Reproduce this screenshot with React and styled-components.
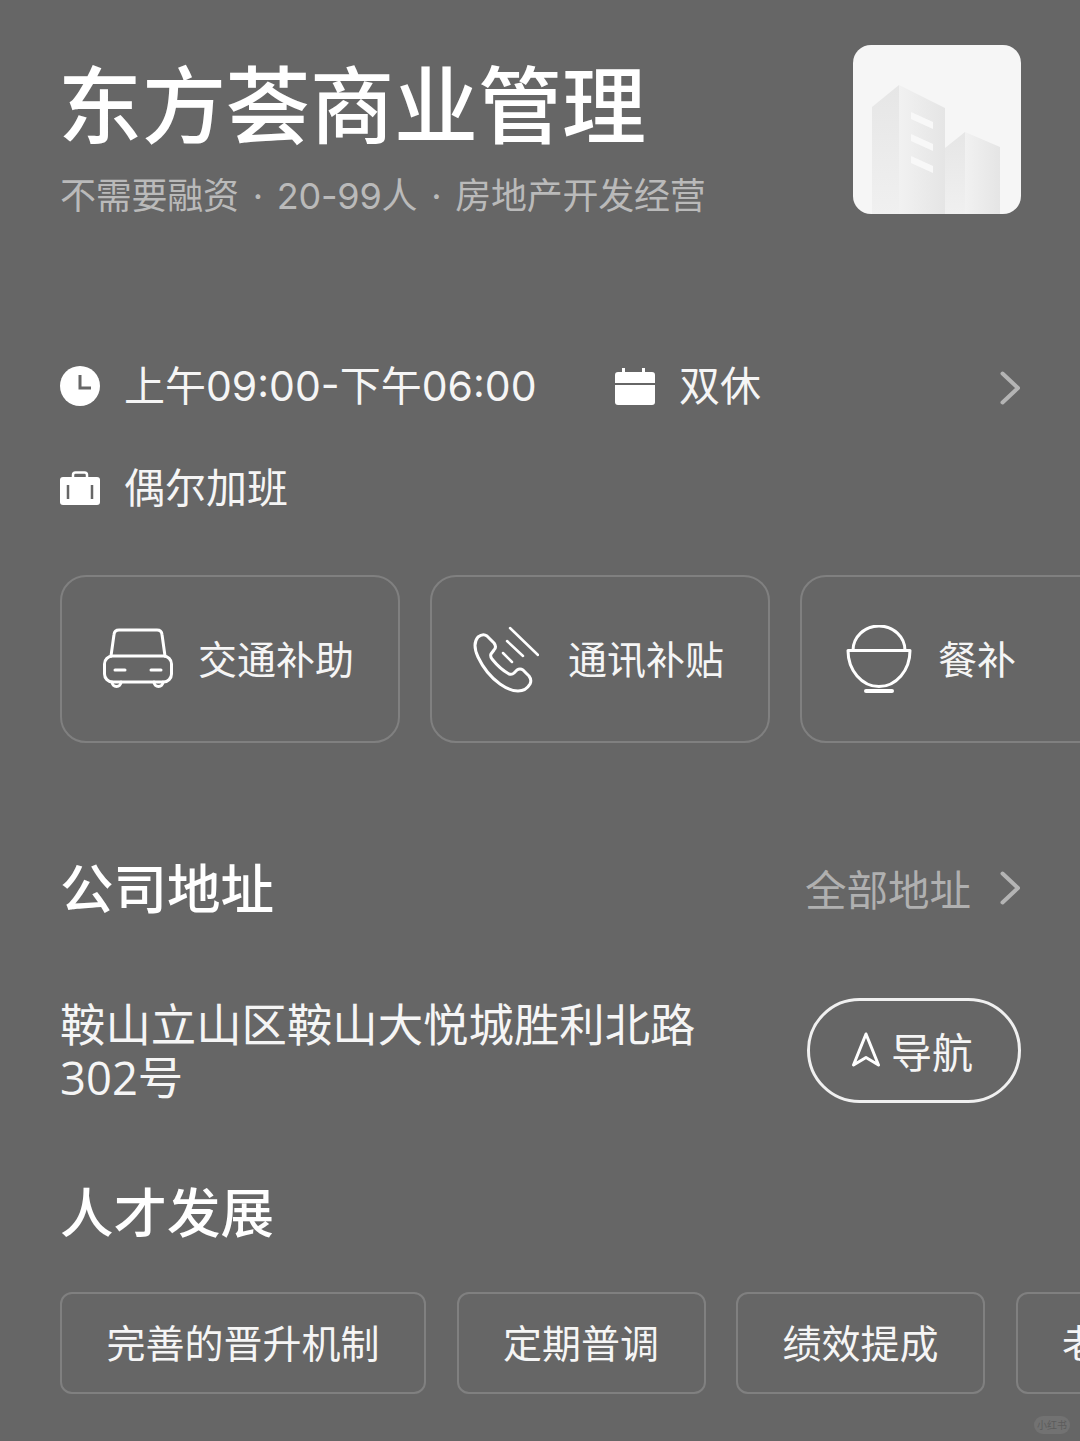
import styled, { createGlobalStyle } from "styled-components";

const GlobalStyle = createGlobalStyle`
  html, body {
    margin: 0;
    padding: 0;
    background: #666666;
  }
  * {
    box-sizing: border-box;
  }
`;

const cjkStack = `"Noto Sans CJK SC", "Noto Sans", sans-serif`;

const Page = styled.div`
  position: relative;
  width: 1080px;
  height: 1441px;
  overflow: hidden;
  padding: 45px 0 0 60px;
  background: #666666;
  color: #f5f5f5;
  font-family: ${cjkStack};
`;

const Header = styled.header`
  display: flex;
  justify-content: space-between;
  align-items: flex-start;
  height: 169px;
  padding-right: 59px;
`;

const TitleBlock = styled.div`
  display: flex;
  flex-direction: column;
`;

const Title = styled.h1`
  margin: 4px 0 0 -2px;
  font-size: 84px;
  line-height: 104px;
  font-weight: 500;
  color: #ffffff;
  white-space: nowrap;
`;

const Subtitle = styled.div`
  margin-top: 23px;
  font-family: "Inter", ${cjkStack};
  font-size: 36px;
  line-height: 40px;
  word-spacing: 4px;
  letter-spacing: -0.23px;
  color: #bababa;
  white-space: nowrap;
`;

const Logo = styled.div`
  width: 168px;
  height: 169px;
  border-radius: 18px;
  overflow: hidden;
  background: #f6f6f6;
`;

const MetaList = styled.div`
  display: flex;
  flex-direction: column;
  gap: 42px;
  margin-top: 142px;
  padding-right: 60px;
`;

const MetaRow = styled.div`
  display: flex;
  align-items: center;
  height: 60px;
`;

const MetaItem = styled.div`
  display: flex;
  align-items: center;
  gap: 24px;
  width: ${(props) => (props.$width ? `${props.$width}px` : "auto")};
  font-family: "Inter", ${cjkStack};
  font-size: 41px;
  line-height: 60px;
  white-space: nowrap;
`;

const Push = styled.div`
  margin-left: auto;
  display: flex;
  align-items: center;
  gap: 29px;
`;

const MetaChevron = styled(Push)`
  padding-top: 3px;
`;

const ScrollRow = styled.div`
  display: flex;
  gap: 30px;
  width: 1200px;
`;

const BenefitRow = styled(ScrollRow)`
  margin-top: 57px;
`;

const BenefitCard = styled.div`
  flex: 0 0 340px;
  height: 168px;
  display: flex;
  align-items: center;
  gap: ${(props) => props.$gap}px;
  padding-left: ${(props) => props.$inset}px;
  border: 2px solid #808080;
  border-radius: 26px;
  white-space: nowrap;
`;

const CardLabel = styled.span`
  margin-top: -4px;
  font-size: 39px;
`;

const SectionHead = styled.div`
  display: flex;
  align-items: center;
  justify-content: space-between;
  height: 60px;
  margin-top: ${(props) => props.$top}px;
  padding-right: 60px;
`;

const SectionTitle = styled.h2`
  margin: 0;
  padding-bottom: 5px;
  font-size: 53.5px;
  line-height: 60px;
  font-weight: 500;
  color: #ffffff;
`;

const MoreLabel = styled.span`
  font-size: 41.5px;
  line-height: 60px;
  color: #b0b0b0;
`;

const AddressRow = styled.div`
  display: flex;
  justify-content: space-between;
  align-items: flex-start;
  margin-top: 80px;
  padding-right: 59px;
`;

const AddressText = styled.div`
  width: 640px;
  font-family: "Open Sans", ${cjkStack};
  font-size: 45.4px;
  line-height: 53px;
`;

const NavButton = styled.div`
  width: 214px;
  height: 105px;
  display: flex;
  align-items: center;
  justify-content: center;
  gap: 11px;
  padding: 0 3px 2px 0;
  border: 3px solid #f0f0f0;
  border-radius: 53px;
  font-size: 41px;
`;

const TagRow = styled(ScrollRow)`
  gap: 30.5px;
  margin-top: 50px;
`;

const Tag = styled.div`
  flex: 0 0 auto;
  height: 102px;
  display: flex;
  align-items: center;
  padding: 0 44.5px 4px;
  border: 2px solid #808080;
  border-radius: 12px;
  font-size: 39px;
  white-space: nowrap;
`;

const Watermark = styled.div`
  position: absolute;
  right: 10px;
  bottom: 7px;
  width: 36px;
  height: 18px;
  border-radius: 9px;
  background: #727272;
  color: #5c5c5c;
  font-size: 10px;
  line-height: 18px;
  text-align: center;
  white-space: nowrap;
`;

const BuildingLogo = () => (
  <svg width="168" height="169" viewBox="0 0 168 169">
    <defs>
      <linearGradient id="towerFade" x1="0" y1="0" x2="0" y2="1">
        <stop offset="0" stopColor="#e6e6e6" />
        <stop offset="1" stopColor="#f0f0f0" />
      </linearGradient>
      <linearGradient id="towerSide" x1="0" y1="0" x2="1" y2="0">
        <stop offset="0" stopColor="#f1f1f1" />
        <stop offset="1" stopColor="#e5e5e5" />
      </linearGradient>
    </defs>
    <path d="M19 62L46 40V169H19Z" fill="url(#towerFade)" />
    <path d="M46 40L92 63V169H46Z" fill="url(#towerSide)" />
    <path d="M92 103L112 87V169H92Z" fill="url(#towerFade)" />
    <path d="M112 87L147 102V169H112Z" fill="url(#towerSide)" />
    <path d="M58 67L80 77V84L58 74Z" fill="#f8f8f8" />
    <path d="M58 89L80 99V106L58 96Z" fill="#f8f8f8" />
    <path d="M58 111L80 121V128L58 118Z" fill="#f8f8f8" />
  </svg>
);

const ClockIcon = () => (
  <svg width="40" height="40" viewBox="0 0 40 40">
    <circle cx="20" cy="20" r="20" fill="#ffffff" />
    <path d="M20 9V22H31" fill="none" stroke="#666666" strokeWidth="3" />
  </svg>
);

const CalendarIcon = () => (
  <svg width="40" height="38" viewBox="0 0 40 38">
    <path
      d="M3 5H7V1H10V5H27V1H30V5H37A3 3 0 0 1 40 8V16H0V8A3 3 0 0 1 3 5Z"
      fill="#ffffff"
    />
    <path
      d="M0 18H40V35A3 3 0 0 1 37 38H3A3 3 0 0 1 0 35Z"
      fill="#ffffff"
    />
  </svg>
);

const CaseIcon = () => (
  <svg width="40" height="34" viewBox="0 0 40 34">
    <path
      d="M13 7V4A2.5 2.5 0 0 1 15.5 1.5H24.5A2.5 2.5 0 0 1 27 4V7"
      fill="none"
      stroke="#ffffff"
      strokeWidth="2.5"
    />
    <rect y="6" width="40" height="28" rx="3" fill="#ffffff" />
    <path
      d="M8 14V28M32 14V28"
      fill="none"
      stroke="#666666"
      strokeWidth="2.5"
    />
  </svg>
);

const ChevronIcon = () => (
  <svg width="20" height="34" viewBox="0 0 20 34">
    <path
      d="M2.5 2.5L18 17L2.5 31.5"
      fill="none"
      stroke="#b4b4b4"
      strokeWidth="4"
      strokeLinecap="round"
      strokeLinejoin="round"
    />
  </svg>
);

const CarIcon = () => (
  <svg width="70" height="62" viewBox="0 0 70 62" fill="none" stroke="#ffffff" strokeWidth="3" strokeLinecap="round">
    <rect x="1.5" y="28" width="67" height="26" rx="8" />
    <path d="M8 28L11 6.5Q11.5 2 16 2H54Q58.5 2 59 6.5L62 28" />
    <path d="M12 42H22M48 42H58" />
    <path d="M9 54A4.5 4.5 0 0 0 18 54M51 54A4.5 4.5 0 0 0 60 54" />
  </svg>
);

const PhoneIcon = () => (
  <svg width="66" height="67" viewBox="0 0 66 67" fill="none" stroke="#ffffff" strokeWidth="3" strokeLinecap="round" strokeLinejoin="round">
    <path d="M5 11Q10 7 14 10L21 17Q24 21 21 24L18 28Q17 30 19 33Q27 43 36 48Q39 49 41 47L44 44Q47 42 50 44L56 50Q59 54 57 58Q53 65 45 65Q37 65 27 58Q13 48 5 31Q-1 18 5 11Z" />
    <path d="M37 2L65 29M34 15L50 30M30 27L39 36" strokeWidth="2.5" />
  </svg>
);

const BowlIcon = () => (
  <svg width="66" height="68" viewBox="0 0 66 68" fill="none" stroke="#ffffff" strokeWidth="3" strokeLinecap="round" strokeLinejoin="round">
    <path d="M2 25.5A31 36 0 0 0 64 25.5Z" />
    <path d="M7 25.5A26 24.5 0 0 1 59 25.5" />
    <path d="M20 66H46" strokeWidth="4" />
  </svg>
);

const NavArrowIcon = () => (
  <svg width="28" height="36" viewBox="0 0 28 36">
    <path
      d="M14 2L26.5 33L14 25.5L1.5 33Z"
      fill="none"
      stroke="#ffffff"
      strokeWidth="3"
      strokeLinejoin="round"
    />
  </svg>
);

const benefits = [
  { label: "交通补助", icon: <CarIcon />, inset: 41, gap: 25 },
  { label: "通讯补贴", icon: <PhoneIcon />, inset: 41, gap: 29 },
  { label: "餐补", icon: <BowlIcon />, inset: 44, gap: 26 },
];

const tags = ["完善的晋升机制", "定期普调", "绩效提成", "老带新"];

export default function App() {
  return (
    <Page>
      <GlobalStyle />
      <Header>
        <TitleBlock>
          <Title>东方荟商业管理</Title>
          <Subtitle>不需要融资 · 20-99人 · 房地产开发经营</Subtitle>
        </TitleBlock>
        <Logo>
          <BuildingLogo />
        </Logo>
      </Header>

      <MetaList>
        <MetaRow>
          <MetaItem $width={555}>
            <ClockIcon />
            上午09:00-下午06:00
          </MetaItem>
          <MetaItem>
            <CalendarIcon />
            双休
          </MetaItem>
          <MetaChevron>
            <ChevronIcon />
          </MetaChevron>
        </MetaRow>
        <MetaRow>
          <MetaItem>
            <CaseIcon />
            偶尔加班
          </MetaItem>
        </MetaRow>
      </MetaList>

      <BenefitRow>
        {benefits.map((item) => (
          <BenefitCard key={item.label} $inset={item.inset} $gap={item.gap}>
            {item.icon}
            <CardLabel>{item.label}</CardLabel>
          </BenefitCard>
        ))}
      </BenefitRow>

      <SectionHead $top={115}>
        <SectionTitle>公司地址</SectionTitle>
        <Push>
          <MoreLabel>全部地址</MoreLabel>
          <ChevronIcon />
        </Push>
      </SectionHead>

      <AddressRow>
        <AddressText>鞍山立山区鞍山大悦城胜利北路302号</AddressText>
        <NavButton>
          <NavArrowIcon />
          导航
        </NavButton>
      </AddressRow>

      <SectionHead $top={78}>
        <SectionTitle>人才发展</SectionTitle>
      </SectionHead>

      <TagRow>
        {tags.map((tag) => (
          <Tag key={tag}>{tag}</Tag>
        ))}
      </TagRow>

      <Watermark>小红书</Watermark>
    </Page>
  );
}
